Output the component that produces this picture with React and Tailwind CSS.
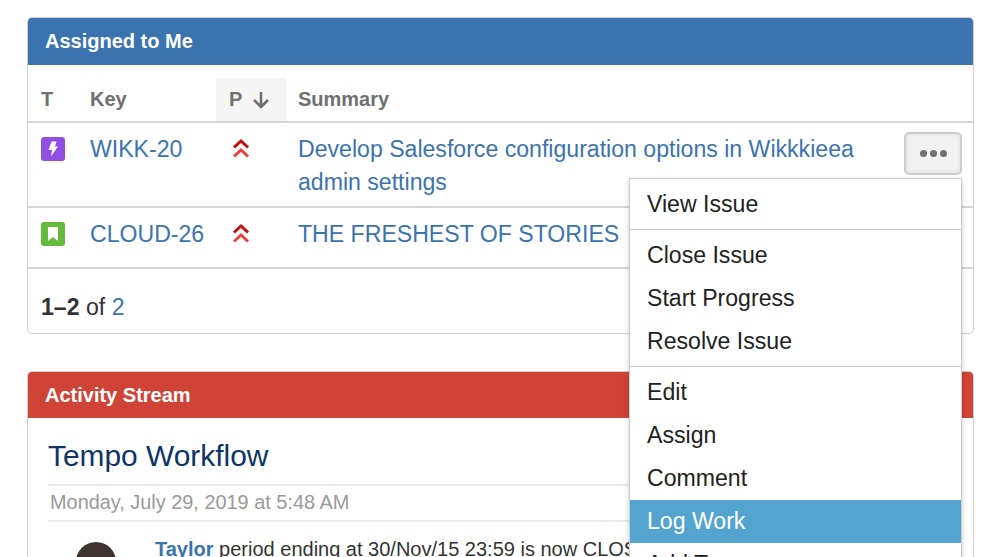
const font = { fontFamily: '"Liberation Sans", Arial, sans-serif' };

const menuGroups = [
    ['View Issue'],
    ['Close Issue', 'Start Progress', 'Resolve Issue'],
    ['Edit', 'Assign', 'Comment', 'Log Work', 'Add Tag'],
];

function TypeIcon({ color, children }) {
    return (
        <span className={`flex h-6 w-6 items-center justify-center rounded-[3px] ${color}`}>
            <svg viewBox="0 0 24 24" className="h-6 w-6" fill="#fff">
                {children}
            </svg>
        </span>
    );
}

function Priority() {
    return (
        <svg viewBox="0 0 18 20" className="h-5 w-[18px]" fill="none" strokeWidth="3">
            <path d="M2 9.500 9 3l7 6.500" stroke="#c40d0d" />
            <path d="M2 18.500 9 12l7 6.500" stroke="#ee3f3f" />
        </svg>
    );
}

function ActionMenu() {
    return (
        <div className="absolute left-[629px] top-[178px] w-[333px] border border-[#cccccc] bg-white text-[23.1px] shadow-[0_3px_6px_rgba(0,0,0,0.2)]">
            {menuGroups.map((items, i) => (
                <ul key={i} className={`py-[3.5px] ${i > 0 ? 'border-t border-[#cccccc]' : ''}`}>
                    {items.map((item) => (
                        <li
                            key={item}
                            className={`flex h-[43px] items-center px-[17px] ${
                                item === 'Log Work' ? 'bg-[#54a4d0] text-white' : 'text-[#222222]'
                            }`}
                        >
                            {item}
                        </li>
                    ))}
                </ul>
            ))}
        </div>
    );
}

export default function App() {
    return (
        <div
            style={font}
            className="relative h-[557px] w-[998px] overflow-hidden bg-white pl-[27px] pr-[24px] pt-[17px] text-[23.1px] leading-[33px] text-[#333333]"
        >
            <section className="h-[317px] overflow-hidden rounded-[5px] border border-[#d0d0d0]">
                <h2 className="flex h-[47px] items-center bg-[#3b73af] px-[17px] text-[20px] font-bold text-white">
                    Assigned to Me
                </h2>
                <div className="flex h-[58px] items-stretch border-b-2 border-[#d5d5d5] pt-[13px] text-[20px] font-bold text-[#707070]">
                    <div className="flex w-[62px] items-center pl-[13px]">T</div>
                    <div className="flex w-[126px] items-center">Key</div>
                    <div className="flex w-[70px] items-center gap-[10px] bg-[#f5f5f5] pl-[13px]">
                        P
                        <svg viewBox="0 0 18 18" className="h-[18px] w-[18px]" fill="none" stroke="#707070" strokeWidth="2.6">
                            <path d="M9 1v15M2 9l7 7 7-7" />
                        </svg>
                    </div>
                    <div className="flex items-center pl-[12px]">Summary</div>
                </div>
                <div className="flex h-[85px] border-b-2 border-[#d5d5d5] pt-[10px] text-[#3b73af]">
                    <div className="w-[62px] pl-[13px] pt-[4px]">
                        <TypeIcon color="bg-[#904ee2]">
                            <path d="M10.500 4.500h5l-1.500 5h3l-7 10 1-6.500H7.500z" />
                        </TypeIcon>
                    </div>
                    <div className="w-[126px]">WIKK-20</div>
                    <div className="w-[82px] pl-[16px] pt-[5px]">
                        <Priority />
                    </div>
                    <div className="w-[590px]">
                        Develop Salesforce configuration options in Wikkkieea admin settings
                    </div>
                </div>
                <div className="flex h-[61px] border-b-2 border-[#d5d5d5] pt-[10px] text-[#3b73af]">
                    <div className="w-[62px] pl-[13px] pt-[4px]">
                        <TypeIcon color="bg-[#63ba3c]">
                            <path d="M7 5h10v14l-5-4-5 4z" />
                        </TypeIcon>
                    </div>
                    <div className="w-[126px]">CLOUD-26</div>
                    <div className="w-[82px] pl-[16px] pt-[5px]">
                        <Priority />
                    </div>
                    <div>THE FRESHEST OF STORIES</div>
                </div>
                <p className="pl-[13px] pt-[22px]">
                    <b>1–2</b> of <span className="text-[#3b73af]">2</span>
                </p>
            </section>

            <button className="absolute left-[904px] top-[132px] flex h-[43px] w-[58px] items-center justify-center gap-[3px] rounded-[5px] border-2 border-[#cccccc] bg-[#f2f2f2] shadow-[inset_0_0_4px_rgba(0,0,0,0.1)]">
                <span className="h-[7px] w-[7px] rounded-full bg-[#707070]" />
                <span className="h-[7px] w-[7px] rounded-full bg-[#707070]" />
                <span className="h-[7px] w-[7px] rounded-full bg-[#707070]" />
            </button>

            <section className="mt-[37px] h-[300px] overflow-hidden rounded-t-[5px] border border-[#d0d0d0]">
                <h2 className="flex h-[46px] items-center bg-[#d04437] px-[17px] text-[20px] font-bold text-white">
                    Activity Stream
                </h2>
                <div className="px-[20px]">
                    <h3 className="flex h-[68px] items-center border-b-2 border-[#e9e9e9] pt-[9px] text-[29.9px] text-[#0e3567]">
                        Tempo Workflow
                    </h3>
                    <p className="flex h-[36px] items-center border-b-2 border-[#e9e9e9] pb-[2px] pl-[2px] text-[19.9px] text-[#999999]">
                        Monday, July 29, 2019 at 5:48 AM
                    </p>
                    <div className="flex pt-[11px]">
                        <div className="ml-[28px] mr-[39px] mt-[9px] h-[40px] w-[40px] shrink-0 rounded-full bg-[#3f3330]" />
                        <p className="whitespace-nowrap text-[20px] leading-[33px]">
                            <b className="text-[#3b73af]">Taylor</b> period ending at 30/Nov/15 23:59 is now CLOSED
                        </p>
                    </div>
                </div>
            </section>

            <ActionMenu />
        </div>
    );
}
